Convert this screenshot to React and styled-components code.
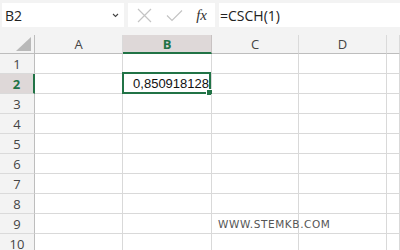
import React from "react";
import styled, { createGlobalStyle } from "styled-components";

const GlobalStyle = createGlobalStyle`
  html, body {
    margin: 0;
    padding: 0;
    background: #f3f3f3;
    font-family: "Open Sans", "Liberation Sans", sans-serif;
  }
`;

const Page = styled.div`
  width: 400px;
  height: 250px;
  overflow: hidden;
  background: #f3f3f3;
`;

const FormulaBar = styled.div`
  display: flex;
  gap: 4px;
  height: 35px;
  padding: 3px 0 0 2px;
  box-sizing: border-box;
`;

const Field = styled.div`
  height: 24px;
  background: #fff;
  box-sizing: border-box;
  display: flex;
  align-items: center;
  color: #222;
  font-size: 14px;
`;

const NameBox = styled(Field)`
  width: 122px;
  padding: 0 5px 0 3px;
  justify-content: space-between;
`;

const IconBox = styled(Field)`
  width: 87px;
  padding: 0 8px 0 9px;
  justify-content: space-between;
`;

const FormulaInput = styled(Field)`
  flex: 1;
  padding-left: 1px;
`;

const Fx = styled.span`
  font-family: "Liberation Serif", serif;
  font-style: italic;
  font-size: 15px;
  color: #333;
`;

const Sheet = styled.div`
  display: grid;
  grid-template-columns: 35px 88px 89px 87px 88px 1fr;
  grid-template-rows: 19px repeat(10, 20px);
  background: #fff;
`;

const Corner = styled.div`
  background: #f3f3f3;
  border-right: 1px solid #bdbdbd;
  border-bottom: 1px solid #bdbdbd;
  display: flex;
  align-items: flex-end;
  justify-content: flex-end;
  padding: 0 3px 2px 0;
`;

const ColHead = styled.div`
  background: ${(p) => (p.$active ? "#ded8d8" : "#f3f3f3")};
  border-right: 1px solid ${(p) => (p.$active ? "#c8c2c2" : "#dadada")};
  border-bottom: ${(p) => (p.$active ? "2px solid #217346" : "1px solid #bdbdbd")};
  color: ${(p) => (p.$active ? "#217346" : "#444")};
  font-weight: ${(p) => (p.$active ? 700 : 400)};
  font-size: 13px;
  display: flex;
  align-items: center;
  justify-content: center;
  box-sizing: border-box;
`;

const RowHead = styled.div`
  background: ${(p) => (p.$active ? "#ded8d8" : "#f3f3f3")};
  border-right: ${(p) => (p.$active ? "2px solid #217346" : "1px solid #bdbdbd")};
  border-bottom: 1px solid #dadada;
  color: ${(p) => (p.$active ? "#217346" : "#444")};
  font-weight: ${(p) => (p.$active ? 700 : 400)};
  font-size: 13px;
  display: flex;
  align-items: center;
  justify-content: center;
  box-sizing: border-box;
`;

const Cell = styled.div`
  position: relative;
  border-right: 1px solid #d9d9d9;
  border-bottom: 1px solid #d9d9d9;
  box-sizing: border-box;
  font-family: "Liberation Sans", sans-serif;
  font-size: 13px;
  color: #111;
  display: flex;
  align-items: center;
  justify-content: flex-end;
  padding-right: 2px;
  white-space: nowrap;
`;

const Selection = styled.div`
  position: absolute;
  top: -2px;
  left: -1px;
  right: 0;
  bottom: -1px;
  border: 2px solid #217346;
  pointer-events: none;

  &::after {
    content: "";
    position: absolute;
    right: -4px;
    bottom: -4px;
    width: 5px;
    height: 5px;
    background: #217346;
    border: 1px solid #fff;
  }
`;

const Watermark = styled.span`
  position: absolute;
  left: 6px;
  top: 4px;
  font-family: "DejaVu Sans", sans-serif;
  font-size: 10.5px;
  letter-spacing: 0.6px;
  color: #555;
  white-space: nowrap;
`;

const cols = ["A", "B", "C", "D", "E"];

function CrossIcon() {
  return (
    <svg width="15" height="15" viewBox="0 0 15 15">
      <path d="M1 1 L14 14 M14 1 L1 14" stroke="#c4c4c4" strokeWidth="1.2" fill="none" />
    </svg>
  );
}

function CheckIcon() {
  return (
    <svg width="17" height="13" viewBox="0 0 17 13">
      <path d="M1 6.5 L6 11.5 L16 1.5" stroke="#c4c4c4" strokeWidth="1.2" fill="none" />
    </svg>
  );
}

export default function App() {
  return (
    <Page>
      <GlobalStyle />
      <FormulaBar>
        <NameBox>
          <span>B2</span>
          <svg width="7" height="5" viewBox="0 0 7 5">
            <path d="M1 1 L3.5 3.5 L6 1" stroke="#444" strokeWidth="1.1" fill="none" />
          </svg>
        </NameBox>
        <IconBox>
          <CrossIcon />
          <CheckIcon />
          <Fx>fx</Fx>
        </IconBox>
        <FormulaInput>=CSCH(1)</FormulaInput>
      </FormulaBar>
      <Sheet>
        <Corner>
          <svg width="15" height="14" viewBox="0 0 15 14">
            <path d="M15 0 L15 14 L0 14 Z" fill="#b9b9b9" />
          </svg>
        </Corner>
        {cols.map((c) => (
          <ColHead key={c} $active={c === "B"}>
            {c === "E" ? "" : c}
          </ColHead>
        ))}
        {Array.from({ length: 10 }, (_, i) => i + 1).map((r) => (
          <React.Fragment key={r}>
            <RowHead $active={r === 2}>{r}</RowHead>
            {cols.map((c) => (
              <Cell key={c}>
                {r === 2 && c === "B" && (
                  <>
                    0,850918128
                    <Selection />
                  </>
                )}
                {r === 9 && c === "C" && <Watermark>WWW.STEMKB.COM</Watermark>}
              </Cell>
            ))}
          </React.Fragment>
        ))}
      </Sheet>
    </Page>
  );
}
